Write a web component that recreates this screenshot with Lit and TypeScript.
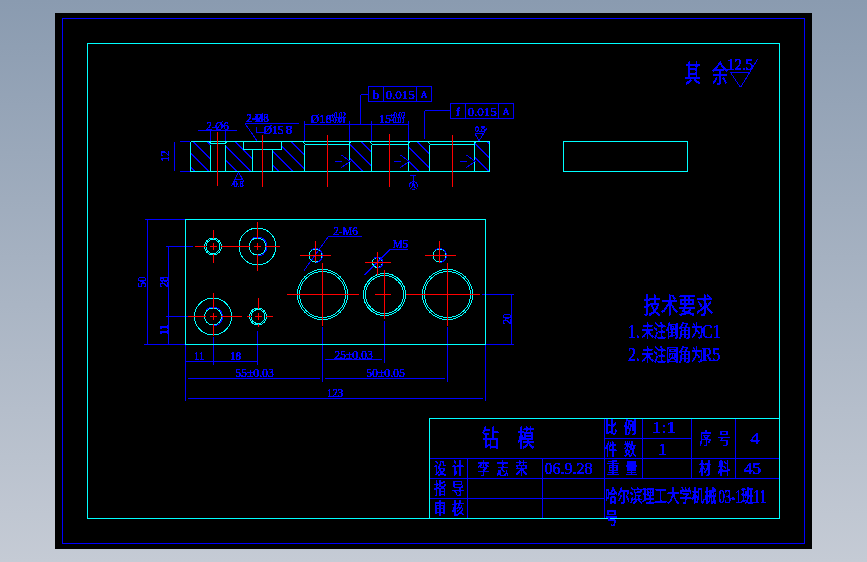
import { LitElement, html, svg, css } from "lit";
import { customElement } from "lit/decorators.js";

type L = [number, number, number, number];

const line = (l: L, c: string) => svg`<line class=${c} x1=${l[0]} y1=${l[1]} x2=${l[2]} y2=${l[3]}></line>`;
const circ = (x: number, y: number, r: number, c = "c") => svg`<circle class=${c} cx=${x} cy=${y} r=${r}></circle>`;
const poly = (p: string, c = "b") => svg`<polyline class=${c} points=${p}></polyline>`;
const arc = (x: number, y: number, r: number) => {
  const a = (-135 * Math.PI) / 180;
  return svg`<path class="b" d="M${x + r * Math.cos(a)} ${y + r * Math.sin(a)} A${r} ${r} 0 1 1 ${x} ${y + r}"></path>`;
};
const t = (x: number, y: number, s: string, size: number, sx = 1, rot = 0, anchor = "middle") =>
  svg`<text text-anchor=${anchor} dominant-baseline="central" font-size=${size} transform="translate(${x} ${y}) rotate(${rot}) scale(${sx} 1)">${s}</text>`;

// CJK title-block glyphs: tall, condensed
const cj = (x: number, y: number, s: string) => t(x, y, s, 16, 0.76);
const num = (x: number, y: number, s: string, sx = 1.05) => t(x, y, s, 17, sx);
const dim = (x: number, y: number, s: string, sx = 0.9, rot = 0) => t(x, y, s, 13, sx, rot);

// Centre cross with the dash-gap-dash pattern of a centre line
const cross = (cx: number, cy: number, x1: number, x2: number, y1: number, y2: number, half = 3.5, gap = 4): L[] => [
  [x1, cy, cx - half - gap, cy], [cx - half, cy, cx + half, cy], [cx + half + gap, cy, x2, cy],
  [cx, y1, cx, cy - half - gap], [cx, cy - half, cx, cy + half], [cx, cy + half + gap, cx, y2],
];

const cyanLines: L[] = [
  [190.5, 141.5, 489.5, 141.5], [190.5, 171.5, 489.5, 171.5], [190.5, 141.5, 190.5, 171.5], [489.5, 141.5, 489.5, 171.5],
  [210.5, 144.5, 210.5, 171.5], [225.5, 144.5, 225.5, 171.5], [209, 141.5, 211, 143.5], [227, 141.5, 225, 143.5], [211, 143.5, 225, 143.5],
  [243.5, 141.5, 243.5, 149.5], [281.5, 141.5, 281.5, 149.5], [243.5, 149.5, 281.5, 149.5], [252.5, 149.5, 252.5, 171.5], [272.5, 149.5, 272.5, 171.5],
  [304.5, 144.5, 304.5, 171.5], [349.5, 144.5, 349.5, 171.5], [304.5, 144.5, 349.5, 144.5], [303, 141.5, 305.5, 144.5], [351, 141.5, 348.5, 144.5],
  [371.5, 144.5, 371.5, 171.5], [408.5, 144.5, 408.5, 171.5], [371.5, 144.5, 408.5, 144.5], [370, 141.5, 372.5, 144.5], [410, 141.5, 407.5, 144.5],
  [429.5, 144.5, 429.5, 171.5], [474.5, 144.5, 474.5, 171.5], [429.5, 144.5, 474.5, 144.5], [428, 141.5, 430.5, 144.5], [476, 141.5, 473.5, 144.5],
];

const redLines: L[] = [
  [217.5, 132, 217.5, 186], [262.5, 135, 262.5, 187], [327.5, 135, 327.5, 187], [389.5, 134, 389.5, 187], [452.5, 135, 452.5, 187],
  ...cross(213, 246.5, 195, 231, 230, 263),
  ...cross(257.5, 246.5, 226, 280, 222, 271),
  ...cross(213, 316.5, 188, 242, 293, 336),
  ...cross(258, 316.5, 247, 273, 298, 327),
  [287, 294.5, 359, 294.5], [322.5, 263, 322.5, 326],
  [375, 294.5, 391, 294.5], [406, 294.5, 480, 294.5], [384.5, 270, 384.5, 319],
  [447.5, 263, 447.5, 326],
  [300, 255.5, 331, 255.5], [315.5, 241, 315.5, 262],
  [365, 262.5, 391, 262.5], [377.5, 252, 377.5, 275],
  [425, 255.5, 456, 255.5], [439.5, 241, 439.5, 263],
];

const blueLines: L[] = [
  // section: dimensions
  [180, 141.5, 190, 141.5], [180, 171.5, 190, 171.5], [174.5, 142, 174.5, 171],
  [198, 130.5, 237, 130.5], [210.5, 130, 210.5, 141], [225.5, 130, 225.5, 141],
  [245, 123.5, 299, 123.5], [245, 123.5, 257.5, 141.5],
  [304.5, 121, 304.5, 141], [349.5, 121, 349.5, 141], [304.5, 124.5, 349.5, 124.5],
  [371.5, 121, 371.5, 141], [408.5, 121, 408.5, 141], [371.5, 124.5, 408.5, 124.5], [349.5, 124.5, 371.5, 124.5],
  [368, 94.5, 360.5, 94.5], [360.5, 94.5, 360.5, 124.5],
  [450, 110.5, 424.5, 110.5], [424.5, 110.5, 424.5, 138.5],
  [383.5, 86.5, 383.5, 101.5], [416.5, 86.5, 416.5, 101.5],
  [465.5, 103.5, 465.5, 118.5], [498.5, 103.5, 498.5, 118.5],
  [410, 175.5, 416, 175.5], [413.5, 175.5, 413.5, 181.5],
  [238.5, 172, 231.5, 186], [238.5, 172, 244, 182], [235, 179, 242, 179],
  // plan view: dimensions
  [145, 219.5, 185, 219.5], [144, 344.5, 185, 344.5], [147.5, 220, 147.5, 344],
  [166, 246.5, 193, 246.5], [166, 316.5, 190, 316.5], [168.5, 247, 168.5, 344],
  [185.5, 345, 185.5, 401], [485.5, 345, 485.5, 401], [213, 337, 213, 365], [257.5, 331, 257.5, 365],
  [322.5, 327, 322.5, 382], [384.5, 321, 384.5, 363], [447.5, 327, 447.5, 382],
  [186, 361.5, 257, 361.5], [188, 378.5, 320, 378.5], [188, 398.5, 483, 398.5],
  [325, 359.5, 382, 359.5], [325, 378.5, 445, 378.5],
  [482, 294.5, 513.5, 294.5], [486, 344.5, 513.5, 344.5], [511.5, 295, 511.5, 344],
  [328.5, 236.5, 361.5, 236.5], [328.5, 236.5, 304, 270.5],
  [390, 249.5, 408, 249.5], [390, 249.5, 364.5, 275],
  // title block
  [604.5, 418.5, 604.5, 518.5], [642.5, 418.5, 642.5, 478.5], [691.5, 418.5, 691.5, 478.5], [735.5, 418.5, 735.5, 478.5],
  [604.5, 438.5, 691.5, 438.5], [430, 458.5, 779, 458.5], [430, 478.5, 779, 478.5], [430, 498.5, 604.5, 498.5],
  [467.5, 458.5, 467.5, 518.5], [542.5, 458.5, 542.5, 518.5],
  // roughness mark top right
  [730.5, 72.5, 749.5, 72.5], [730.5, 72.5, 740.5, 87.5], [740.5, 87.5, 757.5, 59.5],
  [475, 133.5, 479, 141], [479, 141, 487, 128], [475, 133.5, 484, 133.5],
];

const hatchRegions = "M190.5 141.5H210.5V171.5H190.5Z M225.5 141.5H243.5V149.5H252.5V171.5H225.5Z M272.5 149.5H281.5V141.5H304.5V171.5H272.5Z M349.5 141.5H371.5V171.5H349.5Z M408.5 141.5H429.5V171.5H408.5Z M474.5 141.5H489.5V171.5H474.5Z";
const hatch: L[] = Array.from({ length: 24 }, (_, i) => {
  const x = 165 + i * 14;
  return [x, 141.5, x + 30, 171.5] as L;
});

const sideMark = (x: number) => svg`
  <polyline class="b" points="${x + 6.5},155 ${x + 15},161.5 ${x + 6.5},167.5"></polyline>
  <line class="b" x1=${x + 6.5} y1="161.5" x2=${x} y2="161.5"></line>
  ${t(x + 3.5, 157.5, "3.2", 7, 1)}
  ${t(x + 3.5, 165, "3.2", 7, 1)}`;

@customElement("app-root")
export class AppRoot extends LitElement {
  static styles = css`
    :host {
      display: block;
      height: 562px;
      padding: 13px 55px;
      box-sizing: border-box;
      background: linear-gradient(180deg, #8a9bb0 0%, #c5cbd5 100%);
    }
    .sheet {
      display: block;
      width: 757px;
      height: 536px;
      background: #000;
    }
    line, polyline, rect, circle, path {
      fill: none;
      stroke-width: 1;
      shape-rendering: crispEdges;
    }
    .c { stroke: #00ffff; }
    .b { stroke: #0000ff; }
    .r { stroke: #ff0000; }
    .labels text {
      fill: #0000ff;
      stroke: #0000ff;
      stroke-width: 0.25;
      font-family: "Liberation Serif", "Noto Sans CJK SC", serif;
    }
  `;

  render() {
    return html`<svg class="sheet" viewBox="55 13 757 536" xmlns="http://www.w3.org/2000/svg">
      <defs>
        <clipPath id="solid"><path d=${hatchRegions}></path></clipPath>
        <filter id="alias" x="0" y="0" width="100%" height="100%" color-interpolation-filters="sRGB">
          <feComponentTransfer><feFuncA type="discrete" tableValues="0 1 1"></feFuncA></feComponentTransfer>
        </filter>
      </defs>
      <rect class="b" x="62.5" y="18.5" width="742" height="525"></rect>
      <rect class="c" x="87.5" y="43.5" width="692" height="475"></rect>
      <rect class="c" x="563.5" y="141.5" width="124" height="30"></rect>
      <g clip-path="url(#solid)">${hatch.map((l) => line(l, "b"))}</g>
      ${blueLines.map((l) => line(l, "b"))}
      <rect class="b" x="368.5" y="86.5" width="63" height="15"></rect>
      <rect class="b" x="450.5" y="103.5" width="63" height="15"></rect>
      ${poly("256.5,127 256.5,132.5 264,132.5 264,127")}
      ${poly("286,126.5 292,126.5")}
      ${circ(413.5, 185.5, 4, "b")}
      ${cyanLines.map((l) => line(l, "c"))}
      <rect class="c" x="185.5" y="219.5" width="300" height="125"></rect>
      <rect class="c" x="429.5" y="418.5" width="350" height="100"></rect>
      ${circ(213, 246.5, 8.5)}${circ(213, 246.5, 7)}
      ${circ(257.5, 246.5, 18.5)}${circ(257.5, 246.5, 8.5)}${arc(257.5, 246.5, 9.5)}
      ${circ(213, 316.5, 18.5)}${circ(213, 316.5, 8.5)}${arc(213, 316.5, 9.5)}
      ${circ(258, 316.5, 8.5)}${circ(258, 316.5, 7)}
      ${circ(322.5, 294.5, 25)}${circ(322.5, 294.5, 23)}
      ${circ(384.5, 294.5, 21)}${circ(384.5, 294.5, 19)}
      ${circ(447.5, 294.5, 25)}${circ(447.5, 294.5, 23)}
      ${circ(315.5, 255.5, 6.5)}${arc(315.5, 255.5, 7)}
      ${circ(377.5, 262.5, 5)}${arc(377.5, 262.5, 5.5)}
      ${circ(439.5, 255.5, 6.5)}${arc(439.5, 255.5, 7)}
      ${redLines.map((l) => line(l, "r"))}
      ${sideMark(335)}${sideMark(394)}${sideMark(460)}
      <g class="labels" filter="url(#alias)">
        ${dim(165, 156, "12", 0.85, -90)}
        ${dim(217.5, 126, "2-Ø6", 0.85)}
        ${dim(257.5, 117.5, "2-Ø8", 0.85)}
        ${dim(257.5, 117.5, "2-M8", 0.75)}
        ${dim(273.5, 129.5, "Ø15", 0.9)}
        ${dim(289, 129.5, "8", 1)}
        ${t(321, 119, "Ø18", 13, 0.95)}
        ${t(338, 115, "+0.02", 8, 0.85)}
        ${t(338, 120, "-0.01", 8, 0.9)}
        ${t(385, 119, "15", 13, 0.9)}
        ${t(397.5, 115, "+0.02", 8, 0.85)}
        ${t(397.5, 120, "-0.01", 8, 0.9)}
        ${t(376, 94, "b", 13)}
        ${dim(400, 94, "0.015", 1)}
        ${t(424, 94, "A", 11, 0.9)}
        ${t(458, 111, "f", 13)}
        ${dim(482, 111, "0.015", 1)}
        ${t(506, 111, "A", 11, 0.9)}
        ${t(238.5, 184, "0.8", 8, 1)}
        ${t(480, 129, "0.8", 8, 1)}
        ${t(413.5, 185.5, "A", 7.5, 0.9)}
        ${dim(142, 282, "50", 0.85, -90)}
        ${dim(163.5, 282, "28", 0.85, -90)}
        ${dim(163.5, 330, "11", 0.85, -90)}
        ${dim(199, 356, "11", 0.85)}
        ${dim(235.5, 356, "18", 0.85)}
        ${dim(254.5, 373, "55±0.03")}
        ${dim(335, 393, "123", 0.85)}
        ${dim(353.5, 354.5, "25±0.03")}
        ${dim(385.5, 373, "50±0.05")}
        ${dim(506.5, 319, "20", 0.85, -90)}
        ${dim(345.5, 231, "2-M6", 0.85)}
        ${dim(400.5, 244, "M5", 0.85)}
        ${t(693, 74, "其", 24, 0.68)}
        ${t(720, 74, "余", 24, 0.68)}
        ${t(740, 64.5, "12.5", 16, 0.93)}
        ${t(652, 305, "技", 22, 0.78)}
        ${t(669.5, 305, "术", 22, 0.78)}
        ${t(687, 305, "要", 22, 0.78)}
        ${t(704.5, 305, "求", 22, 0.78)}
        ${t(628, 331.5, "1.", 19, 0.82, 0, "start")}
        ${t(641.5, 331.5, "未注倒角为", 16.5, 0.75, 0, "start")}
        ${t(702, 331.5, "C1", 19, 0.82, 0, "start")}
        ${t(628, 355, "2.", 19, 0.82, 0, "start")}
        ${t(641.5, 355, "未注圆角为", 16.5, 0.75, 0, "start")}
        ${t(702, 355, "R5", 19, 0.82, 0, "start")}
        ${t(490.5, 438, "钻", 23, 0.74)}
        ${t(526, 438, "模", 23, 0.74)}
        ${cj(611, 427.5, "比")}
        ${cj(630, 427.5, "例")}
        ${num(664, 427.5, "1:1", 1.1)}
        ${cj(611, 449, "件")}
        ${cj(630, 449, "数")}
        ${num(662.5, 449, "1")}
        ${cj(705.5, 438, "序")}
        ${cj(724, 438, "号")}
        ${num(755, 438, "4")}
        ${cj(440, 468.5, "设")}
        ${cj(458, 468.5, "计")}
        ${cj(483.5, 468.5, "李")}
        ${cj(502.5, 468.5, "志")}
        ${cj(521.5, 468.5, "荣")}
        ${t(568.5, 468.5, "06.9.28", 16, 1)}
        ${cj(613, 468.5, "重")}
        ${cj(631.5, 468.5, "量")}
        ${cj(705, 468.5, "材")}
        ${cj(724, 468.5, "料")}
        ${num(752.5, 468.5, "45", 1)}
        ${cj(440, 488.5, "指")}
        ${cj(458, 488.5, "导")}
        ${cj(440, 508, "审")}
        ${cj(458, 508, "核")}
        ${t(605, 496.5, "哈尔滨理工大学机械", 17, 0.73, 0, "start")}
        ${t(718.5, 496.5, "03-1", 19, 0.66, 0, "start")}
        ${t(741, 496.5, "班", 17, 0.75, 0, "start")}
        ${t(753, 496.5, "11", 19, 0.75, 0, "start")}
        ${t(611.5, 518, "号", 17, 0.75)}
      </g>
    </svg>`;
  }
}
